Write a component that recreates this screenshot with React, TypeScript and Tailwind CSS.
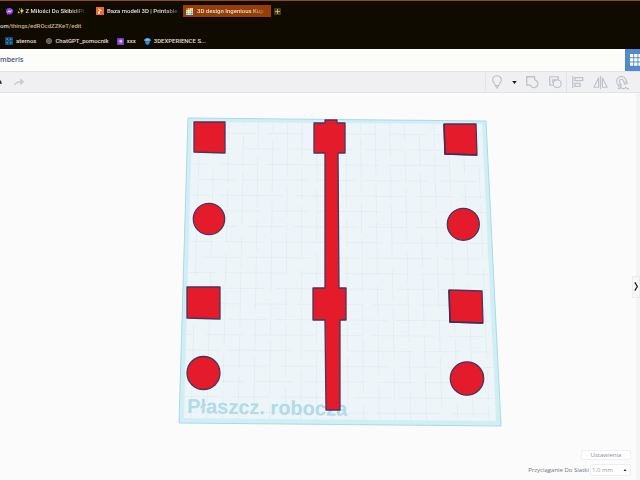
import type { ReactNode } from 'react'

const GRID_X = Array.from({ length: 20 }, (_, i) => i)
const GRID_Y = Array.from({ length: 19 }, (_, i) => i)

function MessengerIcon() {
  return (
    <svg viewBox="0 0 14 14" className="h-[7px] w-[7px] shrink-0" aria-hidden>
      <path d="M7 0C3 0 0 2.8 0 6.5c0 2 .9 3.700 2.300 4.800V14l2.300-1.300c.7.2 1.500.300 2.400.300 4 0 7-2.800 7-6.500S11 0 7 0Z" fill="#9a42f5" />
      <path d="m3 8.500 3-3.300 2 2 3-2-3 3.300-2-2Z" fill="#fff" stroke="#fff" />
    </svg>
  )
}

function PrintablesIcon() {
  return (
    <svg viewBox="0 0 16 16" className="h-2 w-2 shrink-0" aria-hidden>
      <rect width="16" height="16" fill="#f4662f" />
      <path d="m5 3 7 3.500-4 2.500v3.500L4.500 14V9L8 7 5 5Z" fill="#fff" />
    </svg>
  )
}

function TinkercadIcon() {
  const colors = ['#e94b3c', '#f2862b', '#f7c52d', '#a9d86e', '#f5d76e', '#4fb3e8', '#62c1ee', '#7fd0c0', '#3a9be0']
  return (
    <svg viewBox="0 0 9 9" className="h-[7px] w-[7px] shrink-0" aria-hidden>
      <rect width="9" height="9" fill="#fff" />
      {colors.map((c, i) => (
        <rect key={i} x={(i % 3) * 3} y={Math.floor(i / 3) * 3} width="2.500" height="2.500" fill={c} />
      ))}
    </svg>
  )
}

function AternosIcon() {
  return (
    <svg viewBox="0 0 16 16" className="h-2 w-2 shrink-0" aria-hidden>
      <rect width="16" height="16" fill="#174a70" />
      <path d="M3 3h3v3H3zM10 3h3v3h-3zM3 10h3v3H3zM10 10h3v3h-3zM7 7h2v2H7z" fill="#2f9bd8" />
    </svg>
  )
}

function ChatIcon() {
  return (
    <svg viewBox="0 0 14 14" className="h-[6px] w-[6px] shrink-0" fill="none" stroke="#a9a7a0" strokeWidth="1.500" aria-hidden>
      <circle cx="7" cy="7" r="6" />
      <circle cx="7" cy="7" r="2.500" />
      <path d="M7 1v4M12 4 9 6M12 10 9 8M7 13V9M2 10l3-2M2 4l3 2" />
    </svg>
  )
}

function FormsIcon() {
  return (
    <svg viewBox="0 0 16 16" className="h-[7px] w-[7px] shrink-0" aria-hidden>
      <rect width="16" height="16" rx="1" fill="#7540bb" />
      <path d="M4 4h2v2H4zM4 7h2v2H4zM4 10h2v2H4zM7 4h5v2H7zM7 7h5v2H7zM7 10h5v2H7z" fill="#e6d8fa" />
    </svg>
  )
}

function DassaultIcon() {
  return (
    <svg viewBox="0 0 14 14" className="h-[7px] w-[7px] shrink-0" aria-hidden>
      <path d="M0 5c0-3 3-5 7-5s7 2 7 5l-3 2H3Z" fill="#3d9fe0" />
      <path d="M2 8h10l-2 5-3 1-3-1Z" fill="#2474b8" />
      <path d="M4 3h6M3 6h8M5 10h4" stroke="#cdeaff" />
    </svg>
  )
}

function Tab({ icon, label, className }: { icon: ReactNode; label: string; className: string }) {
  return (
    <button type="button" className={`flex h-3 shrink-0 items-center whitespace-nowrap ${className}`}>
      {icon}
      <span className="[mask-image:linear-gradient(to_right,black_80%,#0003)]">{label}</span>
    </button>
  )
}

function Bookmark({ icon, label, className }: { icon: ReactNode; label: string; className: string }) {
  return (
    <a href="#" className={`flex shrink-0 items-center whitespace-nowrap ${className}`}>
      {icon}
      {label}
    </a>
  )
}

function BrowserChrome() {
  return (
    <div className="flex h-[49px] flex-col bg-[#100b00] font-['Roboto','Liberation_Sans',sans-serif] text-[6px] leading-[8px] font-medium text-[#e2dfd8]">
      <div className="h-px bg-[#8f4d18]" />
      <div className="flex h-[17px] pt-1 pl-[6px]">
        <Tab icon={<MessengerIcon />} label="✨ Z Miłości Do SkibidiPi" className="w-[90px] gap-1" />
        <Tab icon={<PrintablesIcon />} label="Baza modeli 3D | Printable" className="w-[87px] gap-[3px]" />
        <Tab icon={<TinkercadIcon />} label="3D design Ingenious Kup" className="w-[88px] gap-1 bg-[#963e04] pl-[3px]" />
        <button type="button" aria-label="Nowa karta" className="ml-[2px] flex h-3 w-2 items-center justify-center">
          <svg viewBox="0 0 14 14" className="h-[7px] w-[7px]" aria-hidden>
            <rect width="14" height="14" rx="2" fill="#4a3d18" />
            <path d="M7 2v10M2 7h10" stroke="#d8cc8c" strokeWidth="1.500" />
          </svg>
        </button>
      </div>
      <div className="flex h-4 items-center whitespace-pre">
        om<span className="text-[#cdb183]">/things/edROcdZZKeT/edit</span>
      </div>
      <div className="flex h-[14px] items-center pl-[5px]">
        <Bookmark icon={<AternosIcon />} label="aternos" className="mr-[10px] gap-[3px]" />
        <Bookmark icon={<ChatIcon />} label="ChatGPT_pomocnik" className="mr-2 gap-[3px]" />
        <Bookmark icon={<FormsIcon />} label="xxx" className="mr-2 gap-[3px]" />
        <Bookmark icon={<DassaultIcon />} label="3DEXPERIENCE S..." className="gap-[3px]" />
      </div>
    </div>
  )
}

function ToolButton({ label, children, className }: { label: string; children: ReactNode; className?: string }) {
  return (
    <button type="button" aria-label={label} className={`flex h-full items-center justify-center ${className ?? 'w-[22px]'}`}>
      {children}
    </button>
  )
}

function Toolbar() {
  return (
    <div className="flex h-[22px] items-stretch border-y border-[#e2e3e6] bg-[#f0f0f3] pr-[7px] text-[#bcc3ca]">
      <ToolButton label="Cofnij" className="w-[6px]">
        <svg viewBox="0 0 6 14" className="h-[14px] w-[6px]" fill="none" stroke="#222c3a" strokeWidth="1.500" aria-hidden>
          <path d="M-3 5C0 5 1 7 1 9" />
        </svg>
      </ToolButton>
      <ToolButton label="Ponów" className="ml-[6px] w-[14px]">
        <svg viewBox="0 0 14 14" className="h-[14px] w-[14px]" fill="none" stroke="#c9cbd0" strokeWidth="1.500" aria-hidden>
          <path d="M2.500 10C3.500 7.500 5.500 6.800 9 6.800" />
          <path d="M8.500 4 12 6.800 8.500 9.600Z" fill="#c9cbd0" strokeWidth="0.800" />
        </svg>
      </ToolButton>
      <div className="flex-1" />
      <div className="my-px w-px bg-[#e3e5e9]" />
      <ToolButton label="Pokaż wszystko">
        <svg viewBox="0 0 16 16" className="h-[14px] w-[14px]" fill="none" stroke="currentColor" strokeWidth="1.300" aria-hidden>
          <path d="M5.500 11C5.500 9 3 8.500 3 5.800a5 5 0 0 1 10 0C13 8.500 10.500 9 10.500 11M5.500 11l2.500 4 2.500-4M6 12h4" />
        </svg>
      </ToolButton>
      <ToolButton label="Opcje widoczności" className="w-3">
        <svg viewBox="0 0 6 4" className="h-[3px] w-[5px]" aria-hidden>
          <path d="M0 0h6L3 4Z" fill="#111820" />
        </svg>
      </ToolButton>
      <ToolButton label="Grupuj" className="w-6">
        <svg viewBox="0 0 16 16" className="h-[14px] w-[14px]" fill="none" stroke="currentColor" strokeWidth="1.500" aria-hidden>
          <path d="M2 2h9v3.500a4.500 4.500 0 1 1-5 6H2Z" />
        </svg>
      </ToolButton>
      <ToolButton label="Rozgrupuj">
        <svg viewBox="0 0 16 16" className="h-[14px] w-[14px]" fill="none" stroke="currentColor" strokeWidth="1.400" aria-hidden>
          <path d="M5.500 11.500H2V2h9.500v3" />
          <circle cx="10.500" cy="10" r="4.500" />
          <path d="M5.500 9V5.500H9" />
        </svg>
      </ToolButton>
      <div className="w-px bg-[#e1e3e7]" />
      <ToolButton label="Wyrównaj">
        <svg viewBox="0 0 16 16" className="h-[14px] w-[14px]" fill="none" stroke="currentColor" strokeWidth="1.400" aria-hidden>
          <path d="M2 1v14M4.500 3h9v3.500h-9zM4.500 9.500h6V13h-6z" />
        </svg>
      </ToolButton>
      <ToolButton label="Odbicie lustrzane">
        <svg viewBox="0 0 16 16" className="h-[15px] w-[15px]" fill="none" stroke="currentColor" strokeWidth="1.200" aria-hidden>
          <path d="M8 1v14M6 3v10H1ZM10 3v10h5Z" />
        </svg>
      </ToolButton>
      <ToolButton label="Magnes">
        <svg viewBox="0 0 16 16" className="h-[15px] w-[15px]" fill="none" stroke="currentColor" strokeWidth="1.200" aria-hidden>
          <g transform="rotate(-25 7 7)">
            <path d="M2 11V6.500a5 5 0 0 1 10 0V11H9V6.500a2 2 0 0 0-4 0V11ZM2 9h3M9 9h3" />
          </g>
          <path d="M3 14.500h2l1-1.500 2 1.500h2l1.500-1.500 1.500 1.500h2" />
        </svg>
      </ToolButton>
    </div>
  )
}

function Workplane() {
  return (
    <svg viewBox="0 93 640 387" className="block w-full" role="img" aria-label="Płaszczyzna robocza">
      <polygon points="188,118 486,121 501,426 179,423" fill="#d2eef5" stroke="#a5dbe8" />
      <polygon points="192,122 482,124 496,421 184,418" fill="#edf5f8" />
      <g stroke="#cfdfe5" strokeWidth="0.500" opacity="0.600">
        {GRID_X.map((i) => (
          <line key={i} x1={200 + i * 14.600} y1={122 + i * 0.100} x2={191 + i * 15.700} y2={419 + i * 0.100} strokeDasharray="53 11 31 6" strokeDashoffset={i * 17} />
        ))}
        {GRID_Y.map((i) => (
          <line key={i} x1={192 - i * 0.400} y1={133 + i * 15.500} x2={482 + i * 0.700} y2={135 + i * 15.500} strokeDasharray="64 12 37 8" strokeDashoffset={i * 23} />
        ))}
      </g>
      <text x="187" y="413" transform="rotate(1 187 413)" fill="#b0dbe8" fontSize="20" fontWeight="700" fontFamily="'Liberation Sans', Arial, sans-serif">
        Płaszcz. robocza
      </text>
      <g fill="#e31b2b" stroke="#49365f" strokeWidth="1.300" strokeLinejoin="round">
        <polygon points="194,122 225,122 225,153 194,152" />
        <polygon points="187,287 220,287 220,319 187,318" />
        <polygon points="444,124 476,124 477,155 445,154" />
        <polygon points="449,290 482,291 483,323 450,322" />
        <circle cx="209" cy="219" r="15.700" />
        <circle cx="203.500" cy="373" r="16.500" />
        <circle cx="463.300" cy="224.300" r="16" />
        <circle cx="467" cy="378.500" r="16.700" />
        <path d="M325 120H337V123L345 123V153H338L339 288H346V320H340V410H326L325 320H313V288H325V153H314V123H325Z" />
      </g>
      <path d="M444 124l1 30 32 1M449 290l1 32 33 1" fill="none" stroke="#3d2d59" strokeWidth="1.500" />
    </svg>
  )
}

function SnapSettings() {
  return (
    <div className="absolute right-[9px] bottom-1 flex flex-col items-end gap-1 font-['Open_Sans','Noto_Sans',sans-serif] text-[6px] leading-[10px] text-[#898d96]">
      <button type="button" className="h-[10px] w-[50px] rounded-[2px] border border-[#eff0f1] bg-white leading-[8px]">
        Ustawienia
      </button>
      <div className="flex items-center gap-px text-[#6f747e]">
        <label htmlFor="snap">Przyciąganie Do Siatki</label>
        <div className="relative">
          <select id="snap" defaultValue="1" className="block h-3 w-[41px] appearance-none rounded-[2px] border border-[#edeef0] bg-white pl-px text-[#9699a0]">
            <option value="1">1,0 mm</option>
            <option value="0.5">0,5 mm</option>
            <option value="0.1">0,1 mm</option>
          </select>
          <svg viewBox="0 0 6 4" className="pointer-events-none absolute top-[5px] right-1 h-[2px] w-1" aria-hidden>
            <path d="M0 4h6L3 0Z" fill="#252d38" />
          </svg>
        </div>
      </div>
    </div>
  )
}

export default function App() {
  return (
    <div className="flex min-h-screen flex-col overflow-hidden bg-[#fbfbfb]">
      <BrowserChrome />
      <header className="flex h-[22px] items-stretch justify-between bg-[#fcfcfb]">
        <h1 className="self-center font-['Open_Sans','Noto_Sans',sans-serif] text-[7px] leading-[10px] font-semibold text-[#4c5277]">mberis</h1>
        <button type="button" aria-label="Widok bloków" className="flex w-[15px] items-center overflow-hidden bg-[#5489cc] pl-[5px]">
          <svg viewBox="0 0 12 12" className="h-3 w-3 shrink-0" fill="#fff" aria-hidden>
            <path d="M0 0h3.300v3.300H0zM4.200 0h3.300v3.300H4.200zM8.400 0h3.300v3.300H8.400zM0 4.200h3.300v3.300H0zM4.200 4.200h3.300v3.300H4.200zM8.400 4.200h3.300v3.300H8.400zM0 8.400h3.300v3.300H0zM4.200 8.400h3.300v3.300H4.200zM8.400 8.400h3.300v3.300H8.400z" />
          </svg>
        </button>
      </header>
      <Toolbar />
      <main className="relative flex-1">
        <Workplane />
        <div className="absolute inset-y-0 right-0 flex w-1 items-center bg-[#f3f4f5]">
          <button type="button" aria-label="Pokaż panel kształtów" className="-ml-1 flex h-[22px] w-2 shrink-0 items-center justify-center border border-[#eceded] bg-[#f7f7f7]">
            <svg viewBox="0 0 6 12" className="h-[11px] w-[5px] shrink-0" fill="none" stroke="#15191f" strokeWidth="1.500" aria-hidden>
              <path d="m1 1 3 5-3 5" />
            </svg>
          </button>
        </div>
        <SnapSettings />
      </main>
    </div>
  )
}
